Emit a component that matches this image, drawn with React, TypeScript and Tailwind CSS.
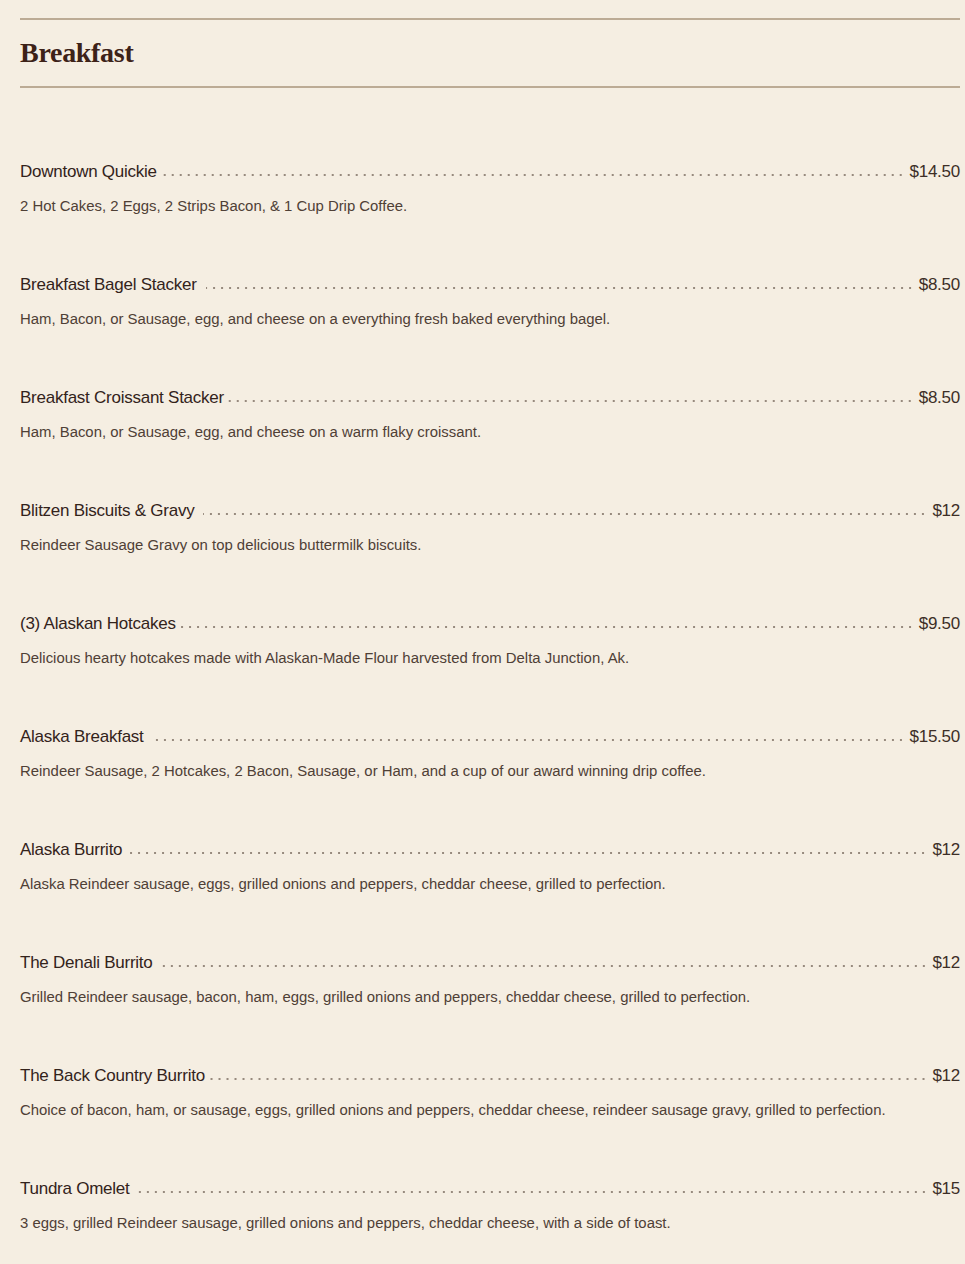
import React from "react";

const items = [
  { name: "Downtown Quickie", price: "$14.50", desc: "2 Hot Cakes, 2 Eggs, 2 Strips Bacon, & 1 Cup Drip Coffee.", gap: false },
  { name: "Breakfast Bagel Stacker", price: "$8.50", desc: "Ham, Bacon, or Sausage, egg, and cheese on a everything fresh baked everything bagel.", gap: true },
  { name: "Breakfast Croissant Stacker", price: "$8.50", desc: "Ham, Bacon, or Sausage, egg, and cheese on a warm flaky croissant.", gap: false },
  { name: "Blitzen Biscuits & Gravy", price: "$12", desc: "Reindeer Sausage Gravy on top delicious buttermilk biscuits.", gap: true },
  { name: "(3) Alaskan Hotcakes", price: "$9.50", desc: "Delicious hearty hotcakes made with Alaskan-Made Flour harvested from Delta Junction, Ak.", gap: false },
  { name: "Alaska Breakfast", price: "$15.50", desc: "Reindeer Sausage, 2 Hotcakes, 2 Bacon, Sausage, or Ham, and a cup of our award winning drip coffee.", gap: true },
  { name: "Alaska Burrito", price: "$12", desc: "Alaska Reindeer sausage, eggs, grilled onions and peppers, cheddar cheese, grilled to perfection.", gap: false },
  { name: "The Denali Burrito", price: "$12", desc: "Grilled Reindeer sausage, bacon, ham, eggs, grilled onions and peppers, cheddar cheese, grilled to perfection.", gap: true },
  { name: "The Back Country Burrito", price: "$12", desc: "Choice of bacon, ham, or sausage, eggs, grilled onions and peppers, cheddar cheese, reindeer sausage gravy, grilled to perfection.", gap: false },
  { name: "Tundra Omelet", price: "$15", desc: "3 eggs, grilled Reindeer sausage, grilled onions and peppers, cheddar cheese, with a side of toast.", gap: false },
];

export default function App() {
  return (
    <div className="min-h-[1264px] w-full bg-[#f5eee2] pl-[20px] pr-[5px] pt-[18px] font-['Liberation_Sans',Arial,sans-serif]">
      <div className="border-t-2 border-b-2 border-[#bcab95]">
        <h1 className="font-['Liberation_Serif','Times_New_Roman',serif] text-[28px] font-bold leading-[66px] tracking-[-0.3px] text-[#3d2218]">
          Breakfast
        </h1>
      </div>
      <div className="mt-[72px] flex flex-col gap-[57px]">
        {items.map((it) => (
          <div key={it.name} className="flex flex-col">
            <div className="flex h-[24px] items-baseline text-[17px] leading-[24px] tracking-[-0.25px]">
              <span className={`text-[#33231b] ${it.gap ? "pr-[9px]" : "pr-[4px]"}`}>{it.name}</span>
              <span className="h-[8px] flex-1 self-baseline bg-[radial-gradient(circle,_#978a7e_0.9px,_transparent_1.3px)] bg-size-[8px_4px] bg-[position:100%_100%] bg-repeat-x"></span>
              <span className="pl-[5px] text-[#3d2f27]">{it.price}</span>
            </div>
            <p className="mt-[12px] text-[14.9px] leading-[20px] text-[#4f4036]">{it.desc}</p>
          </div>
        ))}
      </div>
    </div>
  );
}
